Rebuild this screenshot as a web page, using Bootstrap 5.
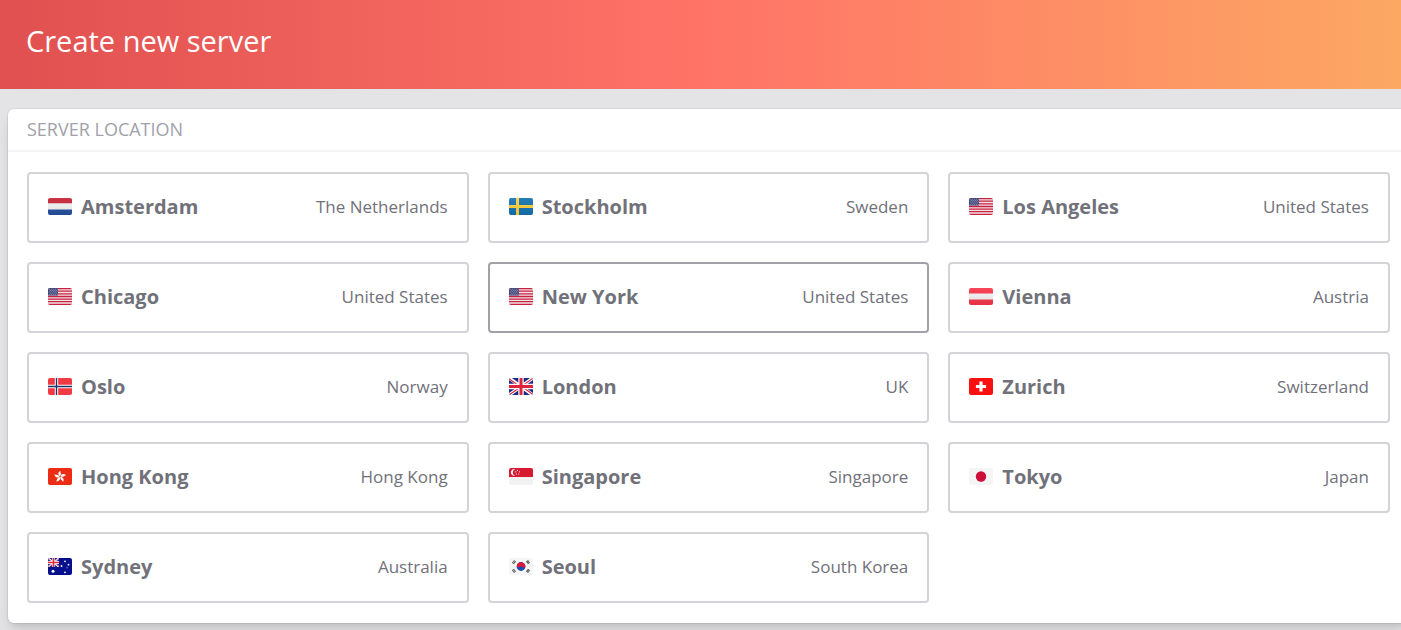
<!DOCTYPE html>
<html lang="en">
<head>
<meta charset="utf-8">
<meta name="viewport" content="width=device-width, initial-scale=1">
<title>Create new server</title>
<link href="https://cdn.jsdelivr.net/npm/bootstrap@5.3.0/dist/css/bootstrap.min.css" rel="stylesheet">
<style>
  body { font-family: "Segoe UI", "Open Sans", "Noto Sans", sans-serif; background: #e4e4e6; color: #71717a; overflow-x: hidden; }
  .page-banner { background: linear-gradient(90deg, #e05050 0%, #ff7367 50%, #fca863 100%); padding: 19px 26px 26px; }
  .page-banner h1 { font-size: 29px; line-height: 44px; font-weight: 400; }
  .location-panel { margin: 20px -8px 8px 8px; border-radius: 6px; box-shadow: 0 0 0 1px rgba(0,0,0,.06), 0 10px 15px -3px rgba(0,0,0,.12), 0 4px 6px -2px rgba(0,0,0,.08); }
  .panel-title { padding: 7px 19px; font-size: 18px; line-height: 27px; color: #a1a1aa; border-bottom: 2px solid #f4f4f5; }
  .panel-content { padding: 20px 19px; }
  .location-grid { --bs-gutter-x: 19px; --bs-gutter-y: 19px; }
  .location-btn { height: 71px; padding: 0 19px 2px; border: 2px solid #d4d4d8; border-radius: 4px; gap: 9px; background: #fff; color: #71717a; }
  .location-btn:hover, .location-btn.hovered { border-color: #a1a1aa; }
  .city { font-size: 20px; line-height: 28px; font-weight: 700; }
  .country { font-size: 17px; line-height: 24px; }
  .flag { width: 24px; height: 17px; flex: none; border-radius: 2px; }
</style>
</head>
<body>
<svg width="0" height="0" class="position-absolute" aria-hidden="true">
  <defs>
    <linearGradient id="shade" x1="0" y1="0" x2="0" y2="1"><stop offset="0" stop-color="#fff" stop-opacity=".08"/><stop offset="1" stop-color="#000" stop-opacity=".08"/></linearGradient>
    <symbol id="us" viewBox="0 0 24 17">
      <path fill="#f3e3e7" d="M0 0h24v17H0z"/>
      <path stroke="#c8203f" stroke-width="1.3" d="M0 .6h24M0 3.2h24M0 5.8h24M0 8.5h24M0 11.1h24M0 13.7h24M0 16.4h24"/>
      <path fill="#3f4478" d="M0 0h10v7.5H0z"/>
      <path stroke="#b4b7d2" stroke-width=".8" stroke-dasharray=".9 1.1" d="M.8 1.2h9M1.8 2.5h8M.8 3.8h9M1.8 5.1h8M.8 6.4h9"/>
    </symbol>
    <symbol id="uk" viewBox="0 0 24 17" preserveAspectRatio="none">
      <path fill="#1c2a87" d="M0 0h24v17H0z"/>
      <path stroke="#fff" stroke-width="3.4" d="M0 0l24 17M24 0L0 17"/>
      <path stroke="#e0243c" stroke-width="1.1" d="M0 .8l12 8.5M12 8l12 8.5M24 .2L12 8.7M12 8.7L0 17"/>
      <path stroke="#fff" stroke-width="5.4" d="M12 0v17M0 8.5h24"/>
      <path stroke="#e0243c" stroke-width="3" d="M12 0v17M0 8.5h24"/>
    </symbol>
  </defs>
</svg>

<header class="page-banner text-white"><h1 class="m-0">Create new server</h1></header>

<main class="location-panel bg-white">
  <h2 class="panel-title text-uppercase fw-normal m-0">Server location</h2>
  <div class="panel-content">
    <div class="row row-cols-3 location-grid mt-0">
      <div class="col mt-0"><button type="button" class="location-btn w-100 d-flex align-items-center">
        <svg class="flag" viewBox="0 0 24 17"><path fill="#f5f5f5" d="M0 0h24v17H0z"/><path fill="#c62334" d="M0 0h24v5.3H0z"/><path fill="#25509f" d="M0 11.5h24V17H0z"/><path fill="url(#shade)" d="M0 0h24v17H0z"/></svg>
        <span class="city">Amsterdam</span><span class="country ms-auto">The Netherlands</span></button></div>
      <div class="col mt-0"><button type="button" class="location-btn w-100 d-flex align-items-center">
        <svg class="flag" viewBox="0 0 24 17"><path fill="#1472b1" d="M0 0h24v17H0z"/><path stroke="#ffcf3c" stroke-width="3" d="M8.5 0v17M0 8.5h24"/><path fill="url(#shade)" d="M0 0h24v17H0z"/></svg>
        <span class="city">Stockholm</span><span class="country ms-auto">Sweden</span></button></div>
      <div class="col mt-0"><button type="button" class="location-btn w-100 d-flex align-items-center">
        <svg class="flag"><use href="#us"/></svg>
        <span class="city">Los Angeles</span><span class="country ms-auto">United States</span></button></div>
      <div class="col"><button type="button" class="location-btn w-100 d-flex align-items-center">
        <svg class="flag"><use href="#us"/></svg>
        <span class="city">Chicago</span><span class="country ms-auto">United States</span></button></div>
      <div class="col"><button type="button" class="location-btn hovered w-100 d-flex align-items-center">
        <svg class="flag"><use href="#us"/></svg>
        <span class="city">New York</span><span class="country ms-auto">United States</span></button></div>
      <div class="col"><button type="button" class="location-btn w-100 d-flex align-items-center">
        <svg class="flag" viewBox="0 0 24 17"><path fill="#f8364a" d="M0 0h24v17H0z"/><path fill="#f5f5f5" d="M0 5.5h24v6H0z"/><path fill="url(#shade)" d="M0 0h24v17H0z"/></svg>
        <span class="city">Vienna</span><span class="country ms-auto">Austria</span></button></div>
      <div class="col"><button type="button" class="location-btn w-100 d-flex align-items-center">
        <svg class="flag" viewBox="0 0 24 17"><path fill="#f23a44" d="M0 0h24v17H0z"/><path stroke="#fff" stroke-width="3.4" d="M8.5 0v17M0 8.5h24"/><path stroke="#1d3468" stroke-width="1.4" d="M8.5 0v17M0 8.5h24"/></svg>
        <span class="city">Oslo</span><span class="country ms-auto">Norway</span></button></div>
      <div class="col"><button type="button" class="location-btn w-100 d-flex align-items-center">
        <svg class="flag"><use href="#uk"/></svg>
        <span class="city">London</span><span class="country ms-auto">UK</span></button></div>
      <div class="col"><button type="button" class="location-btn w-100 d-flex align-items-center">
        <svg class="flag" viewBox="0 0 24 17"><path fill="#fb1010" d="M0 0h24v17H0z"/><path stroke="#fff" stroke-width="3.2" d="M12 3.4v10.2M6.9 8.5h10.2"/></svg>
        <span class="city">Zurich</span><span class="country ms-auto">Switzerland</span></button></div>
      <div class="col"><button type="button" class="location-btn w-100 d-flex align-items-center">
        <svg class="flag" viewBox="0 0 24 17"><path fill="#ea2d14" d="M0 0h24v17H0z"/><g fill="#fff"><path id="petal" d="M12 8.2c-2.6-1.6-1.8-4.6.6-5.5-.7 1.7 1.4 3-.6 5.500z"/><use href="#petal" transform="rotate(72 12 8.7)"/><use href="#petal" transform="rotate(144 12 8.7)"/><use href="#petal" transform="rotate(216 12 8.7)"/><use href="#petal" transform="rotate(288 12 8.7)"/></g></svg>
        <span class="city">Hong Kong</span><span class="country ms-auto">Hong Kong</span></button></div>
      <div class="col"><button type="button" class="location-btn w-100 d-flex align-items-center">
        <svg class="flag" viewBox="0 0 24 17"><path fill="#f2f2f2" d="M0 0h24v17H0z"/><path fill="#d81a30" d="M0 0h24v9H0z"/><path fill="#fff" d="M6 1.2a3.3 3.3 0 1 0 0 6.4 3.4 3.4 0 0 1 0-6.4z"/><g fill="#fff"><circle cx="8.5" cy="2.3" r=".6"/><circle cx="10.5" cy="3.8" r=".6"/><circle cx="6.8" cy="3.8" r=".6"/><circle cx="7.4" cy="6" r=".6"/><circle cx="9.7" cy="6" r=".6"/></g></svg>
        <span class="city">Singapore</span><span class="country ms-auto">Singapore</span></button></div>
      <div class="col"><button type="button" class="location-btn w-100 d-flex align-items-center">
        <svg class="flag" viewBox="0 0 24 17"><path fill="#f5f5f5" d="M0 0h24v17H0z"/><circle cx="12" cy="8.5" r="5.2" fill="#cb0f38"/></svg>
        <span class="city">Tokyo</span><span class="country ms-auto">Japan</span></button></div>
      <div class="col"><button type="button" class="location-btn w-100 d-flex align-items-center">
        <svg class="flag" viewBox="0 0 24 17"><path fill="#06108f" d="M0 0h24v17H0z"/><use href="#uk" width="11" height="9"/><g fill="#fff"><circle cx="5" cy="13.2" r="1.5"/><circle cx="17" cy="3.3" r=".9"/><circle cx="13.5" cy="8" r=".9"/><circle cx="20.500" cy="6.7" r=".9"/><circle cx="19" cy="9.7" r=".5"/><circle cx="17" cy="14.3" r=".9"/></g></svg>
        <span class="city">Sydney</span><span class="country ms-auto">Australia</span></button></div>
      <div class="col"><button type="button" class="location-btn w-100 d-flex align-items-center">
        <svg class="flag" viewBox="0 0 24 17"><path fill="#f5f5f5" d="M0 0h24v17H0z"/><circle cx="12" cy="8.5" r="4.4" fill="#1b4db3"/><path fill="#e01735" d="M7.900 7a4.400 4.400 0 0 1 8.400 2.400c-1.200.7-3-.9-4.200-.9-1.500 0-3 1.500-4 0z"/><path stroke="#444" stroke-width="2.800" stroke-dasharray=".9 .4" d="M4 5.500l2-2.600M18 2.900l2 2.600M4 11.500l2 2.600M18 14.100l2-2.600"/></svg>
        <span class="city">Seoul</span><span class="country ms-auto">South Korea</span></button></div>
    </div>
  </div>
</main>
<script src="https://cdn.jsdelivr.net/npm/bootstrap@5.3.0/dist/js/bootstrap.bundle.min.js"></script>
</body>
</html>
